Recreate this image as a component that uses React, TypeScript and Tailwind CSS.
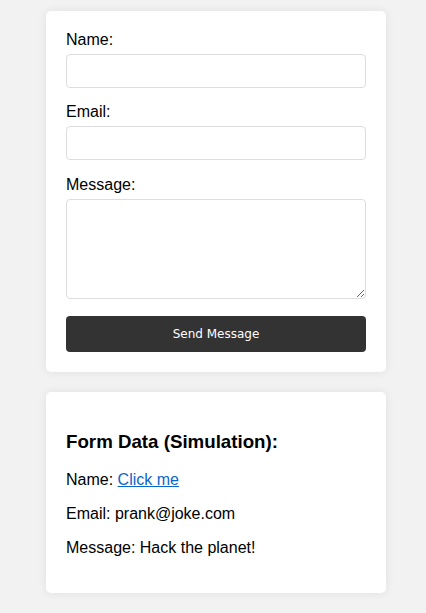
export default function App() {
  return (
    <div className="min-h-screen bg-[#f2f2f2] pt-[11px] pb-5 font-['Liberation_Sans',Arial,sans-serif] text-[16px] text-black">
      {/* form card */}
      <div className="ml-[46px] w-[340px] rounded-[5px] bg-white p-5 shadow-[0_0_10px_rgba(0,0,0,0.08)]">
        <label className="mb-[5px] block leading-[18px]">Name:</label>
        <input type="text" className="mb-[15px] block h-[34px] w-full rounded-[4px] border border-[#dddddd] px-2" />

        <label className="mb-[5px] block leading-[18px]">Email:</label>
        <input type="email" className="mb-[16px] block h-[34px] w-full rounded-[4px] border border-[#dddddd] px-2" />

        <label className="mb-[5px] block leading-[18px]">Message:</label>
        <textarea className="mb-[17px] block h-[100px] w-full rounded-[4px] border border-[#dddddd] px-2" />

        <button className="block h-[36px] w-full rounded-[4px] bg-[#333333] font-['DejaVu_Sans',sans-serif] text-[12px] text-white">
          Send Message
        </button>
      </div>

      {/* output card */}
      <div className="ml-[46px] mt-5 w-[340px] rounded-[5px] bg-white px-5 pt-[39px] pb-[36px] shadow-[0_0_10px_rgba(0,0,0,0.08)]">
        <h3 className="text-[18.72px] font-bold leading-[22px]">Form Data (Simulation):</h3>
        <p className="mt-[18px] leading-[18px]">
          Name:{' '}
          <a href="#" className="text-[#0b66c9] underline">
            Click me
          </a>
        </p>
        <p className="mt-4 leading-[18px]">Email: prank@joke.com</p>
        <p className="mt-4 leading-[18px]">Message: Hack the planet!</p>
      </div>
    </div>
  );
}
